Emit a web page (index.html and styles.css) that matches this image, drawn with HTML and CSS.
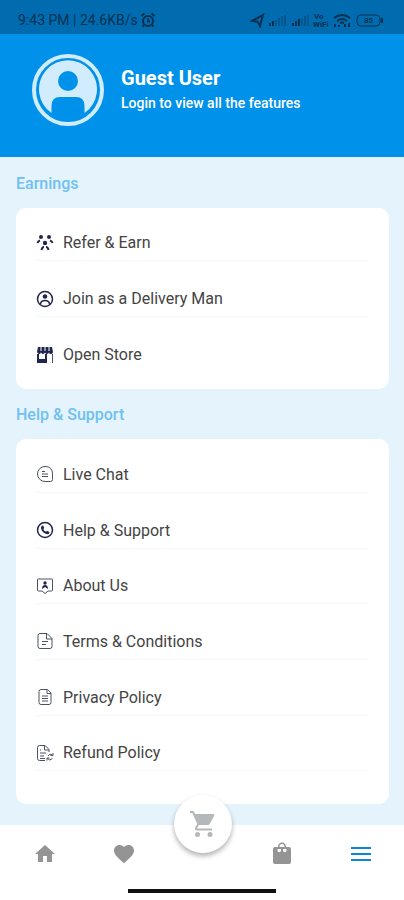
FILE: index.html
```html
<!DOCTYPE html>
<html lang="en">
<head>
<meta charset="utf-8">
<meta name="viewport" content="width=device-width, initial-scale=1">
<title>Menu</title>
<link rel="stylesheet" href="styles.css">
</head>
<body>
<div class="app">
  <div class="status">
    <span>9:43 PM | 24.6KB/s</span>
    <svg class="alarm" viewBox="0 0 16 16"><circle cx="8" cy="9" r="5"/><path d="M8 6.500v3h2M1.500 4l3-2.500M14.500 4l-3-2.500M4 13l-1.500 1.500M12 13l1.500 1.500"/></svg>
    <svg class="signals" viewBox="0 0 134 16">
      <path class="line" d="M2 9L13 3L10 14L7.500 9.500Z"/>
      <path class="bar" d="M20 11v3M23 9v5"/><path class="bar dim" d="M26 8v6M29 6v8M32 4v10M35 3v11"/>
      <path class="bar" d="M43 11v3M46 9v5M49 7v7"/><path class="bar dim" d="M52 6v8M55 4v10M58 3v11"/>
      <text x="64" y="7">Vo</text><text x="63" y="15">WiFi</text>
      <path class="line" d="M84 6q8-6 16 0M87 9q5-4 10 0M90 11q2-1 4 0"/><path class="bar" d="M85 12v3M89 13v2M95 12v3M99 11v4"/>
      <rect class="line thin" x="107" y="3" width="23" height="11" rx="4"/><path class="bar" d="M132 6v5"/><text x="114" y="11">85</text>
    </svg>
  </div>
  <header class="profile">
    <svg class="avatar" viewBox="0 0 72 72">
      <circle class="ring" cx="36" cy="36" r="34"/>
      <path class="disc" d="M19.500 59A29 29 0 1 1 52.500 59V52Q52.500 43 44 43H28Q19.500 43 19.500 52Z"/>
      <circle class="head" cx="36" cy="27" r="10"/>
    </svg>
    <div>
      <h1>Guest User</h1>
      <p>Login to view all the features</p>
    </div>
  </header>
  <main>
    <h2>Earnings</h2>
    <ul class="card">
      <li><a href="#refer"><svg viewBox="0 0 18 18"><g class="solid"><circle cx="5" cy="3" r="2"/><circle cx="13" cy="3" r="2"/><circle cx="9" cy="9" r="2.200"/></g><path class="heavy" d="M1.500 9Q2 7 4 6.500M16.500 9Q16 7 14 6.500M5.500 16Q6 13 8 13M12.500 16Q12 13 10 13"/></svg>Refer &amp; Earn</a></li>
      <li><a href="#delivery"><svg viewBox="0 0 18 18"><circle class="mid" cx="9" cy="9" r="7.500"/><circle class="solid" cx="9" cy="6.500" r="2.300"/><path class="mid" d="M4.500 14Q5 10.500 9 10.500T13.500 14"/></svg>Join as a Delivery Man</a></li>
      <li><a href="#store"><svg viewBox="0 0 18 18"><path class="solid" d="M2 1h14l1 5q0 2-2 2t-2-1.500Q12 8 11 8T9 6.500Q8 8 7 8T5 6.500Q4 8 3 8T1 6Z"/><path class="heavy" d="M2 8v8h8V8"/><path d="M16.500 8v9"/><path class="solid" d="M2 13h8v4H2Z"/><path class="gap" d="M5 1v4M9 1v4M13 1v4"/></svg>Open Store</a></li>
    </ul>
    <h2>Help &amp; Support</h2>
    <ul class="card grow">
      <li><a href="#chat"><svg viewBox="0 0 18 18"><path d="M9 1.500H10Q16.500 2 16.500 9V14.500Q16.500 16.500 14.500 16.500H9A7.500 7.500 0 0 1 9 1.500ZM6 6.500h3M6 9h6M6 11.500h6"/></svg>Live Chat</a></li>
      <li><a href="#help"><svg viewBox="0 0 18 18"><circle class="mid" cx="9" cy="9" r="7.500"/><path class="solid" d="M5.500 5L7 4.500L8.300 7L7.300 8Q8 10 10 10.700L11 9.700L13.500 11L13 12.500Q12 14 9 12.500Q5 10 5 6.500Z"/></svg>Help &amp; Support</a></li>
      <li><a href="#about"><svg viewBox="0 0 18 18"><path d="M2 2h14q.5 0 .5.5V13q0 1-1 1H12L9 16.500L6 14H2.500q-1 0-1-1V2.500Q1.500 2 2 2Z"/><circle class="solid" cx="9" cy="6" r="1.700"/><path class="solid" d="M6 12Q6 8 9 8T12 12L9 10Z"/></svg>About Us</a></li>
      <li><a href="#terms"><svg viewBox="0 0 18 18"><path d="M4 1.500h7L16 6.500V14.500q0 2-2 2H4q-2 0-2-2V3.500q0-2 2-2ZM10.500 2V7H16M6 9.500h6M6 12.500h4"/></svg>Terms &amp; Conditions</a></li>
      <li><a href="#privacy"><svg viewBox="0 0 18 18"><path d="M5 1.500h6.500L15 5V14.500q0 2-2 2H5q-2 0-2-2V3.500q0-2 2-2ZM11 2V5.500h4M6 8h6M6 10.500h6M6 13h6"/></svg>Privacy Policy</a></li>
      <li><a href="#refund"><svg viewBox="0 0 18 18"><path d="M9 16.500H3.500q-2 0-2-2V3.500q0-2 2-2H9L13 5.500V8M8.500 2V6H13M4 6h1M4 9h6M4 12h4M4 14.500h5M16.500 11q-3-2-4.500 1M11.500 14.500q2 3 5 0M14.500 11.500h2.500V9M13.500 14h-2.500v2.500"/></svg>Refund Policy</a></li>
    </ul>
  </main>
  <nav aria-label="Main">
    <a href="#home" aria-label="Home"><svg viewBox="0 0 24 24"><path d="M10 20v-6h4v6h5v-8h3L12 3 2 12h3v8z"/></svg></a>
    <a href="#favourites" aria-label="Favourites"><svg viewBox="0 0 24 24"><path d="M12 21.350l-1.450-1.320C5.400 15.360 2 12.280 2 8.500 2 5.420 4.420 3 7.500 3c1.740 0 3.410.81 4.500 2.090C13.090 3.810 14.760 3 16.500 3 19.580 3 22 5.420 22 8.500c0 3.780-3.400 6.860-8.550 11.540z"/></svg></a>
    <div class="slot"><a class="fab" href="#cart" aria-label="Cart"><svg viewBox="0 0 28 28"><path d="M4 4H24Q26 4 25 6L21 13.500Q20.300 15 18.500 15H9Z"/><path class="frame" d="M1 2H4L9.500 14L7 18Q6.500 19.500 8 19.500H23"/><circle cx="8.500" cy="24.500" r="2.500"/><circle cx="21" cy="24.500" r="2.500"/></svg></a></div>
    <a href="#orders" aria-label="Orders"><svg viewBox="0 0 24 24"><path fill-rule="evenodd" d="M5 5H8A4 4.500 0 0 1 16 5H19Q21 5 21 7V20Q21 22 19 22H5Q3 22 3 20V7Q3 5 5 5ZM9.500 5H14.500A2.500 3 0 0 0 9.500 5ZM7.500 7V8.500A1.750 1.750 0 0 0 11 8.500V7ZM13 7V8.500A1.750 1.750 0 0 0 16.500 8.500V7Z"/></svg></a>
    <a class="active" href="#menu" aria-label="Menu" aria-current="page"><svg viewBox="0 0 24 24"><path d="M2 5h20v2H2zM2 11h20v2H2zM2 17h20v2H2z"/></svg></a>
  </nav>
  <div class="gesture"></div>
</div>
</body>
</html>
```
FILE: styles.css
```css
* { box-sizing: border-box; }
body { margin: 0; font-family: Roboto, "Liberation Sans", sans-serif; background: #e4f3fc; }
h1, h2, p, ul { margin: 0; padding: 0; }
a { color: inherit; text-decoration: none; }
.app { display: flex; flex-direction: column; min-height: 100vh; }

.status { display: flex; align-items: center; height: 34px; padding: 5px 20px 0 18px; background: #006caf; color: #07304f; font-size: 14px; }
.status svg { height: 16px; fill: none; stroke: #07304f; }
.alarm { width: 16px; margin-left: 2px; stroke-width: 2; }
.signals { width: 134px; margin-left: auto; }
.signals .line { stroke-width: 2; }
.signals .thin { stroke-width: 1; }
.signals .bar { stroke-width: 2; }
.signals .dim { opacity: .35; }
.signals text { font-size: 8px; font-weight: 700; fill: #07304f; stroke: none; }

.profile { display: flex; align-items: center; gap: 17px; height: 123px; padding: 0 32px 12px; background: #0091ea; color: #fff; }
.avatar { width: 72px; height: 72px; }
.avatar .ring { fill: none; stroke: #d0ecfd; stroke-width: 4; }
.avatar .disc { fill: #d0ecfd; }
.avatar .head { fill: #0091ea; }
h1 { font-size: 20px; line-height: 26px; font-weight: 700; }
.profile p { font-size: 14px; line-height: 24px; font-weight: 500; }

main { display: flex; flex-direction: column; flex: 1; padding: 17px 15px 21px 16px; }
h2 { height: 20px; margin-bottom: 14px; font-size: 16px; line-height: 20px; font-weight: 500; color: #70c0f2; }
.card { display: flex; flex-direction: column; margin-bottom: 16px; padding: 7px 21px 6px 20px; list-style: none; background: #fff; border-radius: 10px; }
.card li { display: flex; align-items: center; height: 56px; }
.card a { display: flex; flex: 1; align-items: center; gap: 9px; height: 36px; border-bottom: 1px solid #f5f7f8; font-size: 16px; color: #444; }
.card:not(.grow) li:last-child a { border-color: transparent; }
.card svg { width: 18px; height: 18px; fill: none; stroke: #4c5164; stroke-width: 1; }
.card .heavy { stroke: #20264f; stroke-width: 2; }
.card .mid { stroke: #20264f; stroke-width: 1.5; }
.card .solid { fill: #20264f; stroke: none; }
.card .gap { stroke: #fff; stroke-width: 1; }
.grow { flex: 1; margin-bottom: 0; padding-top: 8px; padding-bottom: 23px; }
.grow li { flex: 1; height: auto; min-height: 48px; }

nav { display: grid; grid-template-columns: repeat(5, 1fr); height: 58px; padding: 0 4px 0 6px; background: #fff; }
nav > a, .slot { display: flex; align-items: center; justify-content: center; }
nav svg { width: 24px; height: 24px; fill: #949494; }
nav .active svg { fill: #0d86d4; }
.slot { position: relative; }
.fab { position: absolute; top: -30px; display: flex; align-items: center; justify-content: center; width: 58px; height: 58px; border-radius: 50%; background: #fff; box-shadow: 0 3px 5px rgba(0, 0, 0, .3); }
.fab svg { width: 28px; height: 28px; fill: #b5b8ba; }
.fab .frame { fill: none; stroke: #b5b8ba; stroke-width: 2; }
.gesture { height: 17px; background: linear-gradient(#111, #111) center 6px / 148px 4px no-repeat #fff; }
```
